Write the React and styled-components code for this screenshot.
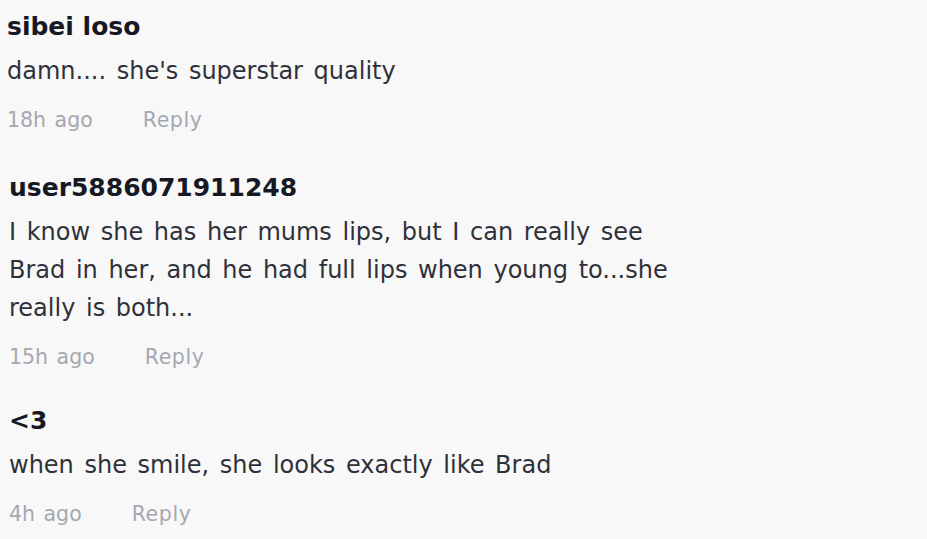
import React from "react";
import styled, { createGlobalStyle } from "styled-components";

const GlobalStyle = createGlobalStyle`
  html, body {
    margin: 0;
    padding: 0;
    background: #f8f8f9;
  }
  body {
    font-family: "DejaVu Sans", "Open Sans", sans-serif;
    -webkit-font-smoothing: antialiased;
  }
`;

const List = styled.div`
  display: flex;
  flex-direction: column;
  padding: 11px 0 0 7px;
  width: 927px;
  min-height: 539px;
  box-sizing: border-box;
  background: #f8f8f9;
`;

const Comment = styled.div`
  display: flex;
  flex-direction: column;
  padding-left: ${(p) => p.$indent || 0}px;
  margin-bottom: ${(p) => p.$gap || 36}px;
`;

const Name = styled.div`
  font-size: 25px;
  line-height: 32px;
  font-weight: 700;
  color: #161823;
`;

const Body = styled.p`
  margin: 9px 0 0;
  font-size: 24px;
  line-height: 38px;
  word-spacing: 3px;
  color: #2f3139;
  max-width: 680px;
`;

const Meta = styled.div`
  display: flex;
  align-items: center;
  gap: 50px;
  margin-top: 15px;
  font-size: 20.5px;
  line-height: 30px;
  word-spacing: 2px;
  color: #a5a7af;
`;

const ReplyButton = styled.span`
  color: #a5a8b2;
  letter-spacing: 0.6px;
  cursor: pointer;
`;

const comments = [
  { user: "sibei loso", text: "damn.... she's superstar quality", time: "18h ago", indent: 0, gap: 37 },
  {
    user: "user5886071911248",
    text: "I know she has her mums lips, but I can really see Brad in her, and he had full lips when young to...she really is both...",
    time: "15h ago",
    indent: 2,
    gap: 33,
  },
  { user: "<3", text: "when she smile, she looks exactly like Brad", time: "4h ago", indent: 2, gap: 0 },
];

export default function App() {
  return (
    <>
      <GlobalStyle />
      <List>
        {comments.map((c) => (
          <Comment key={c.user} $indent={c.indent} $gap={c.gap}>
            <Name>{c.user}</Name>
            <Body>{c.text}</Body>
            <Meta>
              <span>{c.time}</span>
              <ReplyButton>Reply</ReplyButton>
            </Meta>
          </Comment>
        ))}
      </List>
    </>
  );
}
